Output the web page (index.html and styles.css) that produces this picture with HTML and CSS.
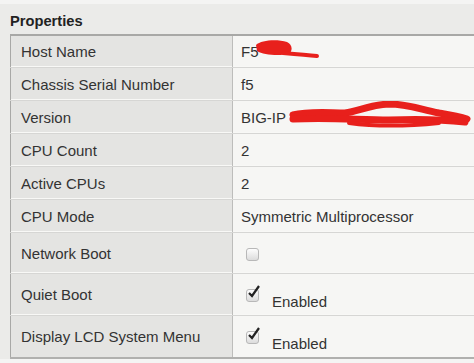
FILE: index.html
```html
<!DOCTYPE html>
<html>
<head>
<meta charset="utf-8">
<link rel="stylesheet" href="styles.css">
</head>
<body>
<div class="panel">
  <div class="title">Properties</div>
  <table class="props">
    <tr class="r32"><td class="lbl">Host Name</td><td class="val"><span class="redact-wrap">F5<svg class="scribble s1" width="74" height="26" viewBox="0 0 74 26"><path d="M3 8 C8 3 24 2 34 5 C40 8 40 15 35 17 C26 19 10 18 4 14 Z" fill="#e8201c"/><path d="M30 16 C42 17 54 18 64 19" stroke="#e8201c" stroke-width="4" stroke-linecap="round" fill="none"/></svg></span></td></tr>
    <tr class="r33"><td class="lbl">Chassis Serial Number</td><td class="val">f5</td></tr>
    <tr class="r33"><td class="lbl">Version</td><td class="val"><span class="redact-wrap">BIG-IP <svg class="scribble s2" width="182" height="30" viewBox="0 0 182 30"><path d="M4 14 C20 10 40 12 56 12 C70 10 80 4 100 3 C118 3 130 8 150 12 C162 14 172 16 178 18" stroke="#e8201c" stroke-width="7" stroke-linecap="round" fill="none"/><path d="M4 18 C40 16 70 19 100 19 C125 18 150 18 176 21" stroke="#e8201c" stroke-width="7" stroke-linecap="round" fill="none"/><path d="M60 22 C90 26 120 25 150 22" stroke="#e8201c" stroke-width="4" stroke-linecap="round" fill="none"/></svg></span></td></tr>
    <tr class="r33"><td class="lbl">CPU Count</td><td class="val">2</td></tr>
    <tr class="r33"><td class="lbl">Active CPUs</td><td class="val">2</td></tr>
    <tr class="r33"><td class="lbl">CPU Mode</td><td class="val">Symmetric Multiprocessor</td></tr>
    <tr class="r41"><td class="lbl">Network Boot</td><td class="val"><span class="cb"></span></td></tr>
    <tr class="r42"><td class="lbl">Quiet Boot</td><td class="val"><span class="chk"><span class="cb"><svg class="tick" width="14" height="14" viewBox="0 0 14 14"><path d="M2 8 L5 11 L12 1" stroke="#222" stroke-width="2.2" fill="none" stroke-linejoin="miter"/></svg></span><span class="en">Enabled</span></span></td></tr>
    <tr class="rlast"><td class="lbl">Display LCD System Menu</td><td class="val"><span class="chk"><span class="cb"><svg class="tick" width="14" height="14" viewBox="0 0 14 14"><path d="M2 8 L5 11 L12 1" stroke="#222" stroke-width="2.2" fill="none" stroke-linejoin="miter"/></svg></span><span class="en">Enabled</span></span></td></tr>
  </table>
</div>
</body>
</html>
```
FILE: styles.css
```css
html, body {
  margin: 0;
  padding: 0;
  background: #f4f4f3;
  overflow: hidden;
  font-family: "Liberation Sans", Arial, sans-serif;
  color: #333;
}
.panel {
  margin-top: 4px;
  background: #ebebe9;
  padding-left: 10px;
  width: 520px;
}
.title {
  height: 30px;
  box-sizing: border-box;
  padding-top: 9px;
  font-weight: bold;
  font-size: 14.7px;
  color: #222;
}
.props {
  border-collapse: collapse;
  width: 500px;
  border-top: 2px solid #a8a8a6;
  border-left: 1px solid #a8a8a6;
  border-bottom: 2px solid #b0b0ae;
  font-size: 15px;
}
.props td {
  padding: 0;
  border-bottom: 1px solid #d6d6d4;
  box-shadow: inset 0 -1px 0 #f8f8f6;
  vertical-align: middle;
}
.props tr:last-child td { border-bottom: none; box-shadow: none; }
.r32 td { height: 31px; }
.r33 td { height: 32px; }
.r41 td { height: 40px; }
.r42 td { height: 41px; }
.rlast td { height: 41px; }
.lbl {
  width: 211px;
  padding-left: 10px !important;
  background: #e4e4e2;
  border-right: 1px solid #bdbdbb;
}
.val {
  background: #f6f6f4;
  padding-left: 8px !important;
}
.redact-wrap { position: relative; display: inline-block; }
.scribble { position: absolute; }
.s1 { left: 12px; top: -6px; }
.s2 { left: 48px; top: -8px; }
.cb {
  position: relative;
  display: inline-block;
  width: 11px;
  height: 11px;
  margin-left: 5px;
  border: 1px solid #b8b8b8;
  border-radius: 3px;
  background: linear-gradient(#fdfdfd, #dcdcdc);
  vertical-align: middle;
}
.chk { display: inline-flex; align-items: flex-end; padding-top: 4px; }
.chk .cb { margin-bottom: 3px; }
.tick { position: absolute; left: 0px; top: -5px; }
.en { margin-left: 13px; line-height: 14px; margin-bottom: -4px; }
```
